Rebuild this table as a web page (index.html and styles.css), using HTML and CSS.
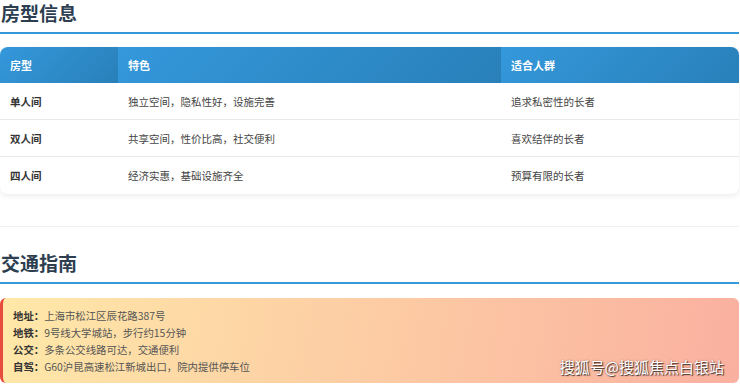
FILE: index.html
```html
<!DOCTYPE html>
<html lang="zh-CN">
<head>
  <meta charset="UTF-8" />
  <title>房型信息 – 交通指南</title>
  <link rel="stylesheet" href="styles.css">
</head>
<body>
  <div class="page">
    <section class="section section-rooms">
      <h2 class="section-title">房型信息</h2>
      <table class="room-table">
        <thead>
          <tr>
            <th class="col-type">房型</th>
            <th class="col-feature">特色</th>
            <th class="col-people">适合人群</th>
          </tr>
        </thead>
        <tbody>
          <tr>
            <td class="room-name">单人间</td>
            <td>独立空间，隐私性好，设施完善</td>
            <td>追求私密性的长者</td>
          </tr>
          <tr>
            <td class="room-name">双人间</td>
            <td>共享空间，性价比高，社交便利</td>
            <td>喜欢结伴的长者</td>
          </tr>
          <tr>
            <td class="room-name">四人间</td>
            <td>经济实惠，基础设施齐全</td>
            <td>预算有限的长者</td>
          </tr>
        </tbody>
      </table>
    </section>

    <section class="section section-traffic">
      <h2 class="section-title">交通指南</h2>
      <div class="traffic-box">
        <p><strong>地址：</strong>上海市松江区辰花路387号</p>
        <p><strong>地铁：</strong>9号线大学城站，步行约15分钟</p>
        <p><strong>公交：</strong>多条公交线路可达，交通便利</p>
        <p><strong>自驾：</strong>G60沪昆高速松江新城出口，院内提供停车位</p>
        <span class="watermark">搜狐号@搜狐焦点白银站</span>
      </div>
    </section>
  </div>
</body>
</html>
```

FILE: styles.css
```css
* {
  box-sizing: border-box;
  margin: 0;
  padding: 0;
}
body {
  font-family: "Noto Sans CJK SC", "Noto Sans", sans-serif;
  background: #fff;
  color: #333;
}
.page {
  width: 739px;
}
.section-rooms {
  padding-bottom: 32px;
  border-bottom: 1px solid #f0f0f0;
}
.section-traffic {
  padding-top: 23px;
}
.section-title {
  font-size: 19px;
  line-height: 25px;
  font-weight: 700;
  color: #2c3e50;
  padding: 0 0 7px 1px;
  border-bottom: 2px solid #3498db;
  margin-bottom: 13px;
}

/* 房型表格 */
.room-table {
  width: 100%;
  border-collapse: separate;
  border-spacing: 0;
  border-radius: 8px;
  overflow: hidden;
  box-shadow: 0 2px 6px rgba(0,0,0,0.08);
  table-layout: fixed;
}
.room-table th {
  background: linear-gradient(135deg, #3498db, #2980b9);
  color: #fff;
  font-size: 11px;
  font-weight: 700;
  text-align: left;
  height: 36px;
  padding: 0 10px;
}
.col-type { width: 118px; }
.col-feature { width: 383px; }
.col-people { width: 238px; }
.room-table td {
  font-size: 10.5px;
  color: #444;
  height: 37px;
  padding: 0 10px;
  border-bottom: 1px solid #e9e9e9;
}
.room-table tbody tr:last-child td {
  border-bottom: none;
}
.room-table .room-name {
  font-weight: 700;
  color: #333;
}

/* 交通信息 */
.traffic-box {
  position: relative;
  margin-top: 14px;
  height: 85px;
  padding: 9px 10px;
  background: linear-gradient(100deg, #ffe8a8, #fab0a0);
  border-left: 3px solid #e74c3c;
  border-radius: 6px;
}
.traffic-box p {
  font-size: 10.4px;
  line-height: 17px;
  color: #555;
}
.traffic-box strong {
  color: #333;
  font-weight: 700;
}
.watermark {
  position: absolute;
  right: 15px;
  bottom: 7px;
  font-size: 15px;
  line-height: 18px;
  color: #fff;
  text-shadow: 1px 1px 1px rgba(0,0,0,0.7), 0 0 2px rgba(0,0,0,0.4);
}
```
